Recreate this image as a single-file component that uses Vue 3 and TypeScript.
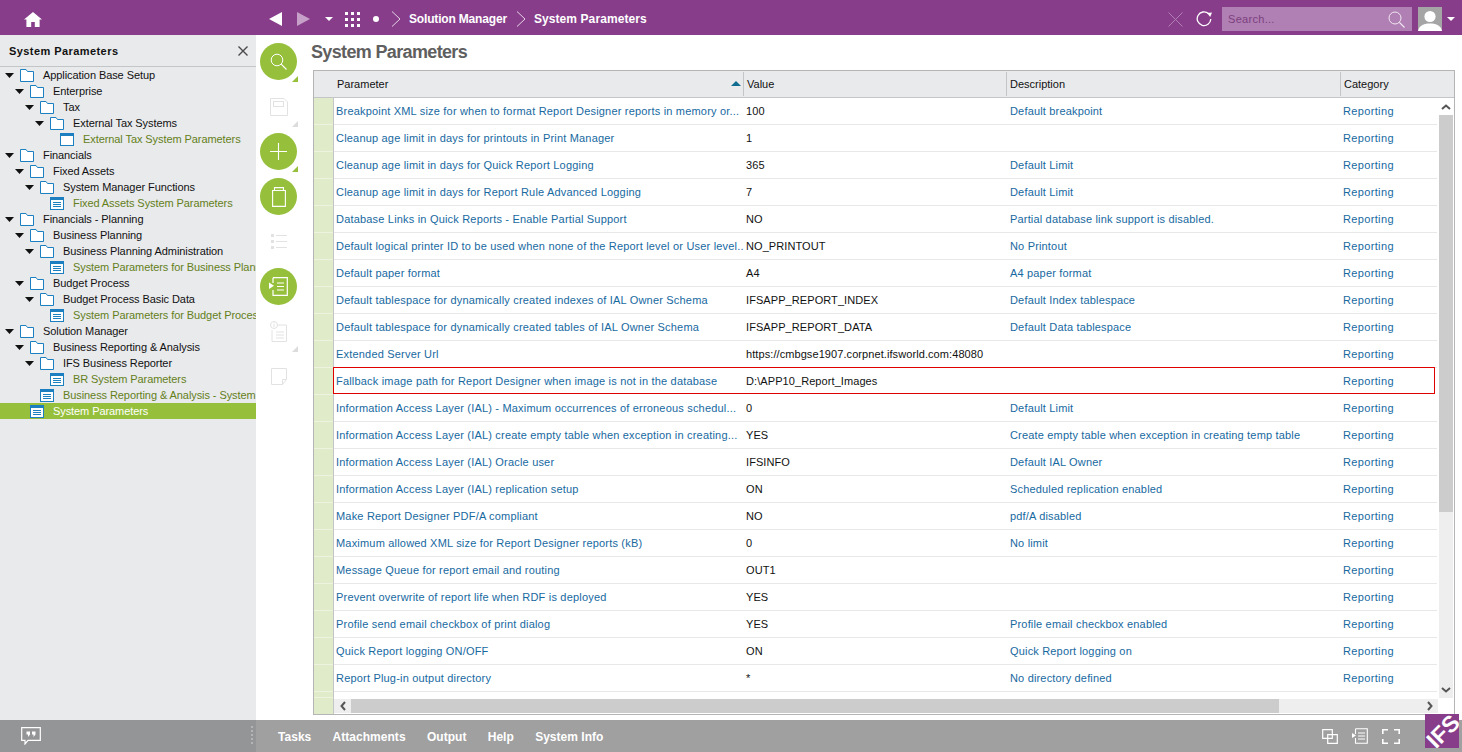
<script setup lang="ts">
interface TreeNode { level: number; label: string; kind: 'folder' | 'window' | 'leaf'; selected?: boolean }
const tree: TreeNode[] = [
  { level: 0, label: 'Application Base Setup', kind: 'folder' },
  { level: 1, label: 'Enterprise', kind: 'folder' },
  { level: 2, label: 'Tax', kind: 'folder' },
  { level: 3, label: 'External Tax Systems', kind: 'folder' },
  { level: 4, label: 'External Tax System Parameters', kind: 'window' },
  { level: 0, label: 'Financials', kind: 'folder' },
  { level: 1, label: 'Fixed Assets', kind: 'folder' },
  { level: 2, label: 'System Manager Functions', kind: 'folder' },
  { level: 3, label: 'Fixed Assets System Parameters', kind: 'leaf' },
  { level: 0, label: 'Financials - Planning', kind: 'folder' },
  { level: 1, label: 'Business Planning', kind: 'folder' },
  { level: 2, label: 'Business Planning Administration', kind: 'folder' },
  { level: 3, label: 'System Parameters for Business Planning', kind: 'leaf' },
  { level: 1, label: 'Budget Process', kind: 'folder' },
  { level: 2, label: 'Budget Process Basic Data', kind: 'folder' },
  { level: 3, label: 'System Parameters for Budget Process', kind: 'leaf' },
  { level: 0, label: 'Solution Manager', kind: 'folder' },
  { level: 1, label: 'Business Reporting & Analysis', kind: 'folder' },
  { level: 2, label: 'IFS Business Reporter', kind: 'folder' },
  { level: 3, label: 'BR System Parameters', kind: 'leaf' },
  { level: 2, label: 'Business Reporting & Analysis - System Parameters', kind: 'leaf' },
  { level: 1, label: 'System Parameters', kind: 'leaf', selected: true },
]
const rows: [string, string, string][] = [
  ['Breakpoint XML size for when to format Report Designer reports in memory or...', '100', 'Default breakpoint'],
  ['Cleanup age limit in days for printouts in Print Manager', '1', ''],
  ['Cleanup age limit in days for Quick Report Logging', '365', 'Default Limit'],
  ['Cleanup age limit in days for Report Rule Advanced Logging', '7', 'Default Limit'],
  ['Database Links in Quick Reports - Enable Partial Support', 'NO', 'Partial database link support is disabled.'],
  ['Default logical printer ID to be used when none of the Report level or User level...', 'NO_PRINTOUT', 'No Printout'],
  ['Default paper format', 'A4', 'A4 paper format'],
  ['Default tablespace for dynamically created indexes of IAL Owner Schema', 'IFSAPP_REPORT_INDEX', 'Default Index tablespace'],
  ['Default tablespace for dynamically created tables of IAL Owner Schema', 'IFSAPP_REPORT_DATA', 'Default Data tablespace'],
  ['Extended Server Url', 'https://cmbgse1907.corpnet.ifsworld.com:48080', ''],
  ['Fallback image path for Report Designer when image is not in the database', 'D:\\APP10_Report_Images', ''],
  ['Information Access Layer (IAL) - Maximum occurrences of erroneous schedul...', '0', 'Default Limit'],
  ['Information Access Layer (IAL) create empty table when exception in creating...', 'YES', 'Create empty table when exception in creating temp table'],
  ['Information Access Layer (IAL) Oracle user', 'IFSINFO', 'Default IAL Owner'],
  ['Information Access Layer (IAL) replication setup', 'ON', 'Scheduled replication enabled'],
  ['Make Report Designer PDF/A compliant', 'NO', 'pdf/A disabled'],
  ['Maximum allowed XML size for Report Designer reports (kB)', '0', 'No limit'],
  ['Message Queue for report email and routing', 'OUT1', ''],
  ['Prevent overwrite of report life when RDF is deployed', 'YES', ''],
  ['Profile send email checkbox of print dialog', 'YES', 'Profile email checkbox enabled'],
  ['Quick Report logging ON/OFF', 'ON', 'Quick Report logging on'],
  ['Report Plug-in output directory', '*', 'No directory defined'],
]
const footerLinks = ['Tasks', 'Attachments', 'Output', 'Help', 'System Info']
const indent = (level: number) => ({ paddingLeft: `${5 + level * 10}px` })
</script>

<template>
  <div class="app">
    <header class="topbar">
      <div class="home">
        <svg width="18" height="15" viewBox="0 0 18 15"><path d="M9 0 L18 7.6 L15.6 7.6 L15.6 15 L10.8 15 L10.8 10 L7.2 10 L7.2 15 L2.4 15 L2.4 7.6 L0 7.6 Z" fill="#fff"/></svg>
      </div>
      <nav class="crumbs">
        <svg class="c-back" width="13" height="14" viewBox="0 0 13 14"><path d="M13 0V14L0 7Z" fill="#fff"/></svg>
        <svg class="c-fwd" width="13" height="14" viewBox="0 0 13 14"><path d="M0 0V14L13 7Z" fill="#c6a0c8"/></svg>
        <svg class="c-caret" width="8" height="4" viewBox="0 0 8 4"><path d="M0 0H8L4 4Z" fill="#fff"/></svg>
        <svg class="c-grid" width="15" height="15" viewBox="0 0 15 15" fill="#fff"><rect width="3" height="3"/><rect x="6" width="3" height="3"/><rect x="12" width="3" height="3"/><rect y="6" width="3" height="3"/><rect x="6" y="6" width="3" height="3"/><rect x="12" y="6" width="3" height="3"/><rect y="12" width="3" height="3"/><rect x="6" y="12" width="3" height="3"/><rect x="12" y="12" width="3" height="3"/></svg>
        <span class="c-dot"></span>
        <svg class="c-chev" width="10" height="16" viewBox="0 0 10 16"><path d="M1 .5 L9 8 L1 15.5" fill="none" stroke="#e4d3e5" stroke-width="1"/></svg>
        <span class="c-text c-first">Solution Manager</span>
        <svg class="c-chev2" width="10" height="16" viewBox="0 0 10 16"><path d="M1 .5 L9 8 L1 15.5" fill="none" stroke="#e4d3e5" stroke-width="1"/></svg>
        <span class="c-text c-last">System Parameters</span>
      </nav>
      <div class="top-right">
        <svg class="t-x" width="15" height="15" viewBox="0 0 15 15"><path d="M.5 .5 L14.5 14.5 M14.5 .5 L.5 14.5" stroke="#b07fb4" stroke-width="1"/></svg>
        <svg class="t-refresh" width="17" height="16" viewBox="0 0 17 16"><path d="M12.5 2.6 A6.8 6.8 0 1 0 14.8 8" fill="none" stroke="#fff" stroke-width="1.3"/><path d="M11 2 L16 1.6 L14.2 6Z" fill="#fff"/></svg>
        <div class="search">
          <span class="search-ph">Search...</span>
          <svg width="17" height="17" viewBox="0 0 17 17"><circle cx="7" cy="7" r="6" fill="none" stroke="#f1e7f1" stroke-width="1"/><path d="M11.4 11.4 L16.5 16.5" stroke="#f1e7f1" stroke-width="1.2"/></svg>
        </div>
        <div class="avatar">
          <svg width="24" height="24" viewBox="0 0 24 24"><circle cx="12" cy="9.5" r="5.6" fill="#fff"/><path d="M0 24 C1 18 7 16.5 12 16.5 C17 16.5 23 18 24 24Z" fill="#fff"/></svg>
        </div>
        <svg class="t-caret" width="8" height="4" viewBox="0 0 8 4"><path d="M0 0H8L4 4Z" fill="#fff"/></svg>
      </div>
    </header>

    <div class="middle">
      <aside class="sidebar">
        <div class="side-head">
          <span>System Parameters</span>
          <svg width="10" height="10" viewBox="0 0 10 10"><path d="M.5 .5 L9.5 9.5 M9.5 .5 L.5 9.5" stroke="#4a4a4a" stroke-width="1.4"/></svg>
        </div>
        <ul class="tree">
          <li v-for="n in tree" :key="n.label + n.level" class="node" :class="{ selected: n.selected, isleaf: n.kind !== 'folder' }" :style="indent(n.level)">
            <span class="toggle">
              <svg v-if="n.kind === 'folder'" width="9" height="5" viewBox="0 0 9 5"><path d="M0 0H9L4.5 5Z" fill="#111"/></svg>
            </span>
            <svg v-if="n.kind === 'folder'" class="nicon" width="14" height="13" viewBox="0 0 14 13"><path d="M.5 12.5V.5H6L7.5 2.5H13.5V12.5Z" fill="#fff" stroke="#1b7fc0"/></svg>
            <svg v-else class="nicon" width="14" height="13" viewBox="0 0 14 13">
              <rect x=".5" y=".5" width="13" height="12" fill="#fff" stroke="#1b7fc0"/>
              <rect x=".5" y=".5" width="13" height="2.5" fill="#1b7fc0"/>
              <path v-if="n.kind === 'leaf'" d="M3 5.5H11M3 7.5H11M3 9.5H11" stroke="#1b7fc0"/>
            </svg>
            <span class="nlabel">{{ n.label }}</span>
          </li>
        </ul>
      </aside>

      <div class="tools">
        <div class="tool on more">
          <svg width="17" height="17" viewBox="0 0 17 17"><circle cx="7" cy="7" r="5.8" fill="none" stroke="#fff"/><path d="M11.2 11.2 L16.5 16.5" stroke="#fff" stroke-width="1.1"/></svg>
        </div>
        <div class="tool off more">
          <svg width="18" height="18" viewBox="0 0 18 18"><path d="M.5 .5H14L17.5 4V17.5H.5Z" fill="none" stroke="#e2e2e2"/><rect x="3.5" y="3.5" width="10" height="5" fill="none" stroke="#e2e2e2"/></svg>
        </div>
        <div class="tool on more">
          <svg width="17" height="17" viewBox="0 0 17 17"><path d="M8.5 0V17M0 8.5H17" stroke="#fff" stroke-width="1.1"/></svg>
        </div>
        <div class="tool on">
          <svg width="14" height="20" viewBox="0 0 14 20"><path d="M.6 3.5H13.4V19.4H.6Z M2.5 3.5V.6H11.5V3.5" fill="none" stroke="#fff" stroke-width="1.1"/></svg>
        </div>
        <div class="tool off">
          <svg width="16" height="15" viewBox="0 0 16 15"><path d="M0 0H3V3H0Z M0 6H3V9H0Z M0 12H3V15H0Z" fill="#e2e2e2"/><path d="M5 1.5H16M5 7.5H16M5 13.5H16" stroke="#e2e2e2"/></svg>
        </div>
        <div class="tool on">
          <svg width="19" height="19" viewBox="0 0 19 19"><path d="M4 .7H18.3V18.3H4V13M4 6V.7" fill="none" stroke="#fff" stroke-width="1.2"/><path d="M0 5.5V12L5 8.7Z" fill="#fff"/><path d="M8 6H15M8 9.5H15M8 13H15" stroke="#fff" stroke-width="1.2"/></svg>
        </div>
        <div class="tool off more">
          <svg width="17" height="21" viewBox="0 0 17 21"><path d="M6 4H16.5V20.5H2V9" fill="none" stroke="#e2e2e2"/><circle cx="4" cy="4" r="3.5" fill="#fff" stroke="#e2e2e2"/><path d="M4 3V6M4 1.5V2.3" stroke="#e2e2e2"/><path d="M6 11H14M6 14H14M6 17H14" stroke="#e2e2e2"/></svg>
        </div>
        <div class="tool off">
          <svg width="16" height="17" viewBox="0 0 16 17"><path d="M.5 .5H15.5V11.5L11.5 16.5H.5Z M15.5 11.5H11.5V16.5" fill="none" stroke="#e2e2e2"/></svg>
        </div>
      </div>

      <main class="main">
        <h1 class="title">System Parameters</h1>
        <section class="table">
          <div class="thead">
            <div class="strip-head"></div>
            <div class="th th-first">Parameter
              <svg class="sort" width="10" height="5" viewBox="0 0 10 5"><path d="M5 0L10 5H0Z" fill="#0f6c90"/></svg>
            </div>
            <div class="th th-value">Value</div>
            <div class="th th-desc">Description</div>
            <div class="th th-cat">Category</div>
          </div>
          <div class="tbody">
            <div class="rows">
              <div v-for="(r, i) in rows" :key="r[0]" class="row">
                <div class="strip"></div>
                <div class="cells" :class="{ focus: i === 10 }">
                  <div class="td td-first link">{{ r[0] }}</div>
                  <div class="td td-value">{{ r[1] }}</div>
                  <div class="td td-desc link">{{ r[2] }}</div>
                  <div class="td td-cat link">Reporting</div>
                </div>
              </div>
              <div class="row-rest"><div class="strip"></div></div>
            </div>
            <div class="vscroll">
              <div class="arrow-v">
                <svg width="10" height="6" viewBox="0 0 10 6"><path d="M1 5L5 1.5L9 5" fill="none" stroke="#555" stroke-width="2"/></svg>
              </div>
              <div class="vthumb"></div>
              <div class="vtrack"></div>
              <div class="arrow-v">
                <svg width="10" height="6" viewBox="0 0 10 6"><path d="M1 1L5 4.5L9 1" fill="none" stroke="#555" stroke-width="2"/></svg>
              </div>
            </div>
          </div>
          <div class="hbar">
            <div class="strip"></div>
            <div class="hscroll">
              <div class="arrow-h">
                <svg width="6" height="10" viewBox="0 0 6 10"><path d="M5 1L1.5 5L5 9" fill="none" stroke="#555" stroke-width="2"/></svg>
              </div>
              <div class="hthumb"></div>
              <div class="htrack"></div>
              <div class="arrow-h">
                <svg width="6" height="10" viewBox="0 0 6 10"><path d="M1 1L4.5 5L1 9" fill="none" stroke="#555" stroke-width="2"/></svg>
              </div>
            </div>
            <div class="hcorner"></div>
          </div>
        </section>
      </main>
    </div>

    <footer class="footer">
      <div class="foot-left">
        <svg width="20" height="18" viewBox="0 0 20 18"><path d="M.7 .7H19.3V13.3H7L4 17V13.3H.7Z" fill="none" stroke="#fff" stroke-width="1.2"/><path d="M5.5 4.5H9V7.5L7 10V7.5H5.5ZM11 4.5H14.5V7.5L12.5 10V7.5H11Z" fill="#fff"/></svg>
        <span class="grip"></span>
      </div>
      <div class="foot-main">
        <span v-for="f in footerLinks" :key="f" class="foot-link">{{ f }}</span>
        <div class="foot-icons">
          <svg width="16" height="15" viewBox="0 0 16 15"><path d="M.7 .7H10.3V9.3H.7Z M5.7 5.7H15.3V14.3H5.7Z" fill="none" stroke="#fff" stroke-width="1.2"/></svg>
          <svg width="16" height="16" viewBox="0 0 16 16"><path d="M3.5 .7H15.3V15.3H3.5V10M3.5 6V.7" fill="none" stroke="#fff" stroke-width="1.1"/><path d="M0 5V10L4 7.5Z" fill="#fff"/><path d="M6 5H13M6 8H13M6 11H13" stroke="#fff"/></svg>
          <svg width="18" height="15" viewBox="0 0 18 15"><path d="M.8 5V.8H6M12 .8H17.2V5M17.2 10V14.2H12M6 14.2H.8V10" fill="none" stroke="#fff" stroke-width="1.6"/></svg>
        </div>
      </div>
    </footer>
    <div class="logo"><span>IFS</span></div>
  </div>
</template>

<style>
html, body { margin: 0; padding: 0; background: #fff; }
</style>

<style scoped>
.app {
  position: relative;
  width: 1462px;
  height: 752px;
  overflow: hidden;
  display: flex;
  flex-direction: column;
  font-family: "Liberation Sans", Arial, sans-serif;
  font-size: 11px;
  color: #111;
}
svg { display: block; flex: none; }

/* top bar */
.topbar { height: 35px; flex: none; box-sizing: border-box; padding-top: 3px; background: #873d8a; display: flex; align-items: center; color: #fff; }
.home { width: 269px; flex: none; padding-left: 24px; box-sizing: border-box; }
.crumbs { display: flex; align-items: center; flex: 1; }
.c-fwd { margin-left: 15px; }
.c-caret { margin-left: 15px; }
.c-grid { margin-left: 12px; }
.c-dot { width: 6px; height: 6px; border-radius: 50%; background: #fff; margin-left: 13px; }
.c-chev { margin-left: 12px; }
.c-chev2 { margin: 0 8px 0 9px; }
.c-text { font-size: 12px; font-weight: bold; white-space: nowrap; margin-top: -1px; }
.c-first { margin-left: 8px; letter-spacing: -0.17px; }
.c-last { letter-spacing: 0.08px; }
.top-right { display: flex; align-items: center; padding-right: 8px; margin-right: -1px; }
.t-refresh { margin-left: 13px; }
.search {
  width: 190px; height: 24px; margin-left: 9px; background: #b07fb3; box-sizing: border-box;
  padding: 0 7px 0 6px; display: flex; align-items: center; justify-content: space-between;
}
.search-ph { color: #7c3f80; font-size: 11px; letter-spacing: 0.3px; }
.avatar { width: 24px; height: 24px; margin-left: 6px; background: #a5a5a5; overflow: hidden; }
.t-caret { margin-left: 5px; }

/* middle */
.middle { flex: 1; display: flex; min-height: 0; }
.sidebar { width: 256px; flex: none; background: #e9eaec; overflow: hidden; }
.side-head {
  height: 32px; box-sizing: border-box; border-bottom: 1px solid #c4c5c7;
  display: flex; align-items: center; justify-content: space-between; padding: 1px 8px 0 9px;
  font-size: 11px; font-weight: bold; letter-spacing: 0.43px; color: #111;
}
.tree { list-style: none; margin: 0; padding: 0; letter-spacing: -0.08px; }
.node { height: 16px; display: flex; align-items: center; white-space: nowrap; }
.toggle { width: 15px; flex: none; display: flex; align-items: center; }
.nicon { flex: none; }
.nlabel { margin-left: 9px; }
.isleaf .nlabel { color: #64801a; }
.selected { background: #96c03c; }
.selected .nlabel { color: #fff; }

/* tools */
.tools { width: 53px; flex: none; box-sizing: border-box; padding: 8px 0 0 4px; display: flex; flex-direction: column; gap: 8px; }
.tool { position: relative; width: 37px; height: 37px; border-radius: 50%; display: flex; align-items: center; justify-content: center; }
.tool.on { background: #96c03c; }
.tool.more::after {
  content: ""; position: absolute; left: 32px; top: 33px; width: 0; height: 0;
  border-style: solid; border-width: 0 0 6px 6px; border-color: transparent transparent #96c03c transparent;
}
.tool.off.more::after { border-color: transparent transparent #dcdcdc transparent; }

/* main */
.main { flex: 1; min-width: 0; padding: 0 7px 5px 2px; display: flex; flex-direction: column; }
.title { margin: 0; height: 35px; line-height: 34px; font-size: 18px; font-weight: bold; color: #5f5f5f; letter-spacing: -0.65px; box-sizing: border-box; }
.table { flex: 1; min-height: 0; border: 1px solid #b5b5b5; display: flex; flex-direction: column; margin-left: 2px; }
.thead { height: 27px; flex: none; box-sizing: border-box; background: #e9eaec; border-bottom: 1px solid #c4c5c7; display: flex; }
.strip-head { width: 20px; flex: none; }
.th { position: relative; display: flex; align-items: center; box-sizing: border-box; padding-left: 3px; color: #111; }
.th-first { width: 409px; }
.th-value, .th-desc, .th-cat { margin-top: 1px; height: 24px; border-left: 1px solid #c4c5c7; }
.th-value { width: 263px; }
.th-desc { width: 334px; }
.th-cat { flex: 1; }
.sort { position: absolute; right: 2px; top: 10px; }
.tbody { flex: 1; min-height: 0; display: flex; }
.rows { flex: 1; min-width: 0; display: flex; flex-direction: column; overflow: hidden; }
.row { height: 27px; flex: none; display: flex; }
.row-rest { flex: 1; display: flex; }
.strip { width: 19px; flex: none; background: #e0ebc9; border-right: 1px solid #c4c5c7; box-shadow: inset 0 -1px 0 #eef3e0; }
.cells { flex: 1; min-width: 0; display: flex; align-items: center; box-sizing: border-box; border-bottom: 1px solid #e8e8e8; }
.cells.focus { border: 1px solid #e00000; margin: -1px 2px 0 -1px; height: 27px; }
.td { white-space: nowrap; overflow: hidden; box-sizing: border-box; padding-left: 2px; }
.td-first { width: 410px; flex: none; letter-spacing: 0.19px; }
.td-value { width: 263px; flex: none; padding-left: 2px; letter-spacing: 0.08px; }
.td-desc { width: 333px; flex: none; padding-left: 3px; letter-spacing: 0.17px; }
.td-cat { flex: 1; padding-left: 3px; letter-spacing: 0.35px; }
.link { color: #17699f; }
.vscroll { width: 14px; flex: none; margin: 0 1px 0 2px; display: flex; flex-direction: column; background: #eee; }
.arrow-v { height: 17px; flex: none; display: flex; align-items: center; justify-content: center; background: #fff; }
.vscroll .arrow-v:last-child { background: #eee; }
.vthumb { height: 397px; flex: none; background: #ccc; }
.vtrack { flex: 1; }
.hbar { height: 16px; flex: none; display: flex; }
.hbar .strip { box-shadow: none; }
.hscroll { flex: 1; display: flex; margin: 1px 0; background: #eee; }
.hcorner { width: 16px; flex: none; }
.arrow-h { width: 17px; flex: none; display: flex; align-items: center; justify-content: center; }
.hthumb { width: 928px; flex: none; background: #ccc; }
.htrack { flex: 1; }

/* footer */
.footer { height: 32px; flex: none; display: flex; background: #a0a0a0; color: #fff; }
.foot-left { width: 256px; flex: none; box-sizing: border-box; background: #949596; padding: 0 3px 0 21px; display: flex; align-items: center; justify-content: space-between; }
.grip { width: 2px; height: 20px; background: repeating-linear-gradient(to bottom, #b4b5b6 0 2px, transparent 2px 4px); }
.foot-main { flex: 1; display: flex; align-items: center; padding-left: 22px; }
.foot-link { font-size: 12px; font-weight: bold; margin-right: 21.3px; padding-top: 2px; letter-spacing: 0.03px; }
.foot-icons { margin-left: auto; margin-right: 62px; display: flex; align-items: center; gap: 14px; }

/* logo */
.logo { position: absolute; left: 1425px; top: 714px; width: 34px; height: 34px; background: #873d8a; overflow: hidden; display: flex; align-items: center; justify-content: center; }
.logo span { font-size: 23px; font-weight: 900; color: #fff; letter-spacing: 0; transform: rotate(-45deg) translate(1px, 1px); }
</style>
